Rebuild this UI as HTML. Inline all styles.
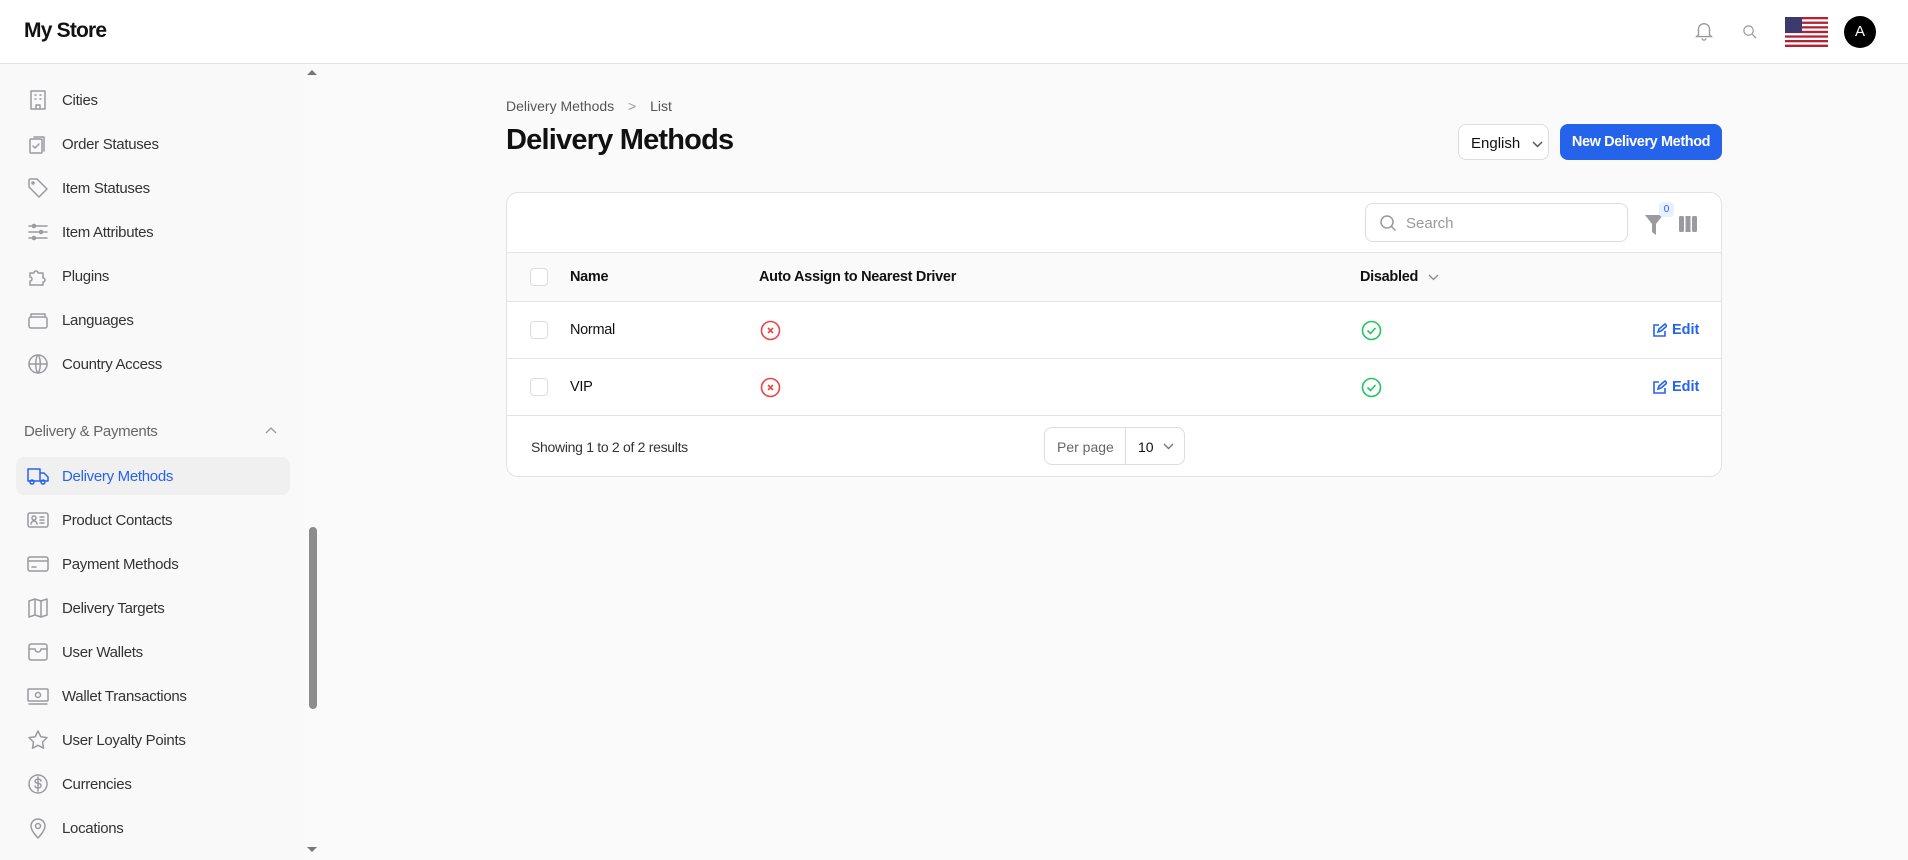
<!DOCTYPE html>
<html><head><meta charset="utf-8"><style>
*{box-sizing:border-box;margin:0;padding:0}
body{width:1908px;height:860px;overflow:hidden;background:#fafafa;font-family:"Liberation Sans",sans-serif;color:#111;position:relative}
.hdr{position:absolute;left:0;top:0;width:1908px;height:64px;background:#fff;border-bottom:1px solid #e5e5e5}
.logo{position:absolute;left:24px;top:19px;font-size:21px;font-weight:bold;letter-spacing:-0.8px}
.side{position:absolute;left:0;top:64px;width:305px;height:796px;background:#f9f9f9}
.track{position:absolute;left:305px;top:64px;width:15px;height:796px;background:#fafafa}
.thumb{position:absolute;left:309px;top:527px;width:8px;height:182px;border-radius:4px;background:#8c8c8c}
.it{position:absolute;left:24px;height:36px;width:264px;display:flex;align-items:center;font-size:15px;color:#333;letter-spacing:-0.3px}
.it svg{width:24px;height:24px;margin-right:12px;margin-left:2px;fill:none;stroke:#9a9aa0;stroke-width:1.5;stroke-linecap:round;stroke-linejoin:round}
.act{left:16px;padding-left:8px;background:#f0f0f1;border-radius:8px;color:#2563eb;width:274px;height:38px}
.act svg{stroke:#2563eb}
.grp{position:absolute;left:24px;top:359px;font-size:15px;color:#666;letter-spacing:-0.3px}
.bc{position:absolute;left:506px;top:98px;font-size:14px;color:#555}
h1{position:absolute;left:506px;top:124px;font-size:29px;font-weight:bold;letter-spacing:-0.8px}
.eng{position:absolute;left:1458px;top:124px;width:91px;height:36px;border:1px solid #ddd;border-radius:8px;background:#fff;font-size:15px;padding:10px 0 0 12px}
.nbtn{position:absolute;left:1560px;top:124px;width:162px;height:36px;background:#2563eb;border-radius:8px;color:#fff;font-weight:bold;font-size:14.5px;text-align:center;line-height:36px;letter-spacing:-0.4px}
.card{position:absolute;left:506px;top:192px;width:1216px;height:285px;background:#fff;border:1px solid #e3e3e3;border-radius:12px;overflow:hidden}
.srch{position:absolute;left:858px;top:10px;width:263px;height:39px;border:1px solid #ddd;border-radius:8px;font-size:15px;color:#999;padding:11px 0 0 40px}
.thead{position:absolute;left:0;top:59px;width:1216px;height:50px;background:#fafafa;border-top:1px solid #e5e5e5;border-bottom:1px solid #e5e5e5}
.row{position:absolute;left:0;width:1216px;height:57px;border-bottom:1px solid #e5e5e5}
.cb{position:absolute;left:23px;width:18px;height:18px;border:1px solid #ddd;border-radius:4px;background:#fff}
.t{position:absolute;font-size:14.5px;letter-spacing:-0.3px}
.b{font-weight:bold}
.edit{position:absolute;left:1146px;color:#2563eb;font-weight:bold;font-size:14.5px;display:flex;align-items:center;gap:5px}
.pp{position:absolute;left:537px;top:234px;width:141px;height:38px;border:1px solid #ddd;border-radius:8px;font-size:14px}
</style></head><body>
<div class="hdr"><div class="logo">My Store</div>
<svg style="position:absolute;left:1693px;top:19px" width="22" height="24" viewBox="0 0 24 24" fill="none" stroke="#999" stroke-width="1.5"><path d="M6 16V10a6 6 0 0112 0v6l2 2H4z M10 20a2 2 0 004 0"/></svg>
<svg style="position:absolute;left:1742px;top:24px" width="15" height="15" viewBox="0 0 16 16" fill="none" stroke="#999" stroke-width="1.3"><circle cx="7" cy="7" r="5"/><path d="M11 11l4 4"/></svg>
<svg style="position:absolute;left:1785px;top:17px" width="43" height="30" viewBox="0 0 43 30"><rect width="43" height="30" rx="4" fill="#fff"/><g fill="#b22234"><rect y="0" width="43" height="2.3"/><rect y="4.6" width="43" height="2.3"/><rect y="9.2" width="43" height="2.3"/><rect y="13.8" width="43" height="2.3"/><rect y="18.4" width="43" height="2.3"/><rect y="23" width="43" height="2.3"/><rect y="27.6" width="43" height="2.4"/></g><rect width="17" height="16" fill="#3c3b6e"/></svg>
<div style="position:absolute;left:1844px;top:16px;width:32px;height:32px;border-radius:50%;background:#000;color:#fff;font-size:15px;text-align:center;line-height:32px">A</div>
</div>
<div class="side">
<div class="it" style="top:18px"><svg viewBox="0 0 24 24"><rect x="5" y="3" width="14" height="18"/><path d="M9 7h1M14 7h1M9 11h1M14 11h1M10 21v-4h4v4"/></svg>Cities</div>
<div class="it" style="top:62px"><svg viewBox="0 0 24 24"><rect x="4" y="7" width="12" height="14" rx="1"/><path d="M8 5h10v14M7 14l2 2 4-4"/></svg>Order Statuses</div>
<div class="it" style="top:106px"><svg viewBox="0 0 24 24"><path d="M3 4v7l10 10 8-8L11 3H4z"/><circle cx="7" cy="7" r="1"/></svg>Item Statuses</div>
<div class="it" style="top:150px"><svg viewBox="0 0 24 24"><path d="M3 6h18M3 12h18M3 18h18"/><circle cx="8" cy="6" r="1.5"/><circle cx="15" cy="12" r="1.5"/><circle cx="8" cy="18" r="1.5"/></svg>Item Attributes</div>
<div class="it" style="top:194px"><svg viewBox="0 0 24 24"><path d="M4 9h4a2 2 0 114 0h5v5a2 2 0 110 4v3H4v-4a2 2 0 100-4z"/></svg>Plugins</div>
<div class="it" style="top:238px"><svg viewBox="0 0 24 24"><rect x="3" y="9" width="18" height="11" rx="2"/><path d="M5 9V6h14v3"/></svg>Languages</div>
<div class="it" style="top:282px"><svg viewBox="0 0 24 24"><circle cx="12" cy="12" r="9"/><path d="M3 12h18M12 3c3 3 3 15 0 18M12 3c-3 3-3 15 0 18"/></svg>Country Access</div>
<div class="grp">Delivery &amp; Payments</div>
<svg style="position:absolute;left:264px;top:362px" width="14" height="10" viewBox="0 0 14 10" fill="none" stroke="#999" stroke-width="1.3"><path d="M2 7l5-5 5 5"/></svg>
<div class="it act" style="top:393px"><svg viewBox="0 0 24 24"><path d="M2 5h12v12H2zM14 9h4l4 4v4h-8"/><circle cx="6" cy="18" r="2"/><circle cx="17" cy="18" r="2"/></svg>Delivery Methods</div>
<div class="it" style="top:438px"><svg viewBox="0 0 24 24"><rect x="2" y="5" width="20" height="14" rx="2"/><circle cx="8" cy="10" r="2"/><path d="M5 16a3 3 0 016 0M14 9h4M14 12h4M14 15h4"/></svg>Product Contacts</div>
<div class="it" style="top:482px"><svg viewBox="0 0 24 24"><rect x="2" y="5" width="20" height="14" rx="2"/><path d="M2 9h20M6 15h4"/></svg>Payment Methods</div>
<div class="it" style="top:526px"><svg viewBox="0 0 24 24"><path d="M3 5l6-2 6 2 6-2v16l-6 2-6-2-6 2zM9 3v16M15 5v16"/></svg>Delivery Targets</div>
<div class="it" style="top:570px"><svg viewBox="0 0 24 24"><rect x="3" y="4" width="18" height="16" rx="2"/><path d="M3 9h6a3 3 0 006 0h6"/></svg>User Wallets</div>
<div class="it" style="top:614px"><svg viewBox="0 0 24 24"><rect x="2" y="5" width="20" height="12" rx="1"/><circle cx="12" cy="11" r="2.5"/><path d="M3 20h18"/></svg>Wallet Transactions</div>
<div class="it" style="top:658px"><svg viewBox="0 0 24 24"><path d="M12 3l2.8 5.7 6.2.9-4.5 4.4 1 6.2L12 17.3 6.5 20.2l1-6.2L3 9.6l6.2-.9z"/></svg>User Loyalty Points</div>
<div class="it" style="top:702px"><svg viewBox="0 0 24 24"><circle cx="12" cy="12" r="9"/><path d="M15 9c0-1-1.3-2-3-2s-3 1-3 2.3 1.3 1.7 3 2 3 .8 3 2.2-1.300 2.5-3 2.5-3-1-3-2M12 5v14"/></svg>Currencies</div>
<div class="it" style="top:746px"><svg viewBox="0 0 24 24"><path d="M12 22s7-7 7-12a7 7 0 10-14 0c0 5 7 12 7 12z"/><circle cx="12" cy="10" r="2.5"/></svg>Locations</div>
</div>
<div class="track"></div>
<svg style="position:absolute;left:307px;top:69px" width="10" height="6"><path d="M0 6L5 1 10 6z" fill="#777"/></svg>
<svg style="position:absolute;left:307px;top:847px" width="10" height="6"><path d="M0 0L5 5 10 0z" fill="#777"/></svg>
<div class="thumb"></div>

<div class="bc">Delivery Methods <span style="margin:0 10px;color:#999">&gt;</span> List</div>
<h1>Delivery Methods</h1>
<div class="eng">English <svg style="margin-left:8px" width="11" height="8" viewBox="0 0 11 8" fill="none" stroke="#555" stroke-width="1.5"><path d="M1 2l4.5 4.5L10 2"/></svg></div>
<div class="nbtn">New Delivery Method</div>

<div class="card">
<div class="srch">Search<svg style="position:absolute;left:13px;top:10px" width="18" height="18" viewBox="0 0 18 18" fill="none" stroke="#999" stroke-width="1.5"><circle cx="8" cy="8" r="6"/><path d="M12.5 12.5l4 4"/></svg></div>
<svg style="position:absolute;left:1138px;top:22px" width="18" height="20" viewBox="0 0 18 20"><path d="M0 0h18L11 9v11l-4-3V9z" fill="#9a9aa0"/></svg>
<div style="position:absolute;left:1152px;top:9px;width:15px;height:15px;border-radius:4px;background:#e8efff;color:#2563eb;font-size:10px;text-align:center;line-height:15px">0</div>
<svg style="position:absolute;left:1172px;top:23px" width="18" height="16" viewBox="0 0 18 16"><rect x="0" y="0" width="5" height="16" rx="1.5" fill="#9a9aa0"/><rect x="6.5" y="0" width="5" height="16" fill="#9a9aa0"/><rect x="13" y="0" width="5" height="16" rx="1.5" fill="#9a9aa0"/></svg>
<div class="thead">
<div class="cb" style="top:15px"></div>
<div class="t b" style="left:63px;top:16px">Name</div>
<div class="t b" style="left:252px;top:16px">Auto Assign to Nearest Driver</div>
<div class="t b" style="left:853px;top:16px">Disabled <svg style="margin-left:6px" width="11" height="7" viewBox="0 0 11 7" fill="none" stroke="#888" stroke-width="1.3"><path d="M1 1l4.5 4.5L10 1"/></svg></div>
</div>
<div class="row" style="top:109px">
<div class="cb" style="top:19px"></div>
<div class="t" style="left:63px;top:20px">Normal</div>
<svg style="position:absolute;left:253px;top:18px" width="21" height="21" viewBox="0 0 21 21" fill="none" stroke="#ef4444" stroke-width="1.6"><circle cx="10.5" cy="10.5" r="9"/><path d="M8 8l5 5M13 8l-5 5"/></svg>
<svg style="position:absolute;left:854px;top:18px" width="21" height="21" viewBox="0 0 21 21" fill="none" stroke="#22c55e" stroke-width="1.6"><circle cx="10.5" cy="10.5" r="9"/><path d="M6.5 10.5l3 3 5-5.5"/></svg>
<div class="edit" style="top:20px"><svg width="14" height="14" viewBox="0 0 14 14" fill="none" stroke="#2563eb" stroke-width="1.6"><path d="M6 2H1v11h11V8M5 9l1-3 6-5 2 2-6 5z"/></svg>Edit</div>
</div>
<div class="row" style="top:166px">
<div class="cb" style="top:19px"></div>
<div class="t" style="left:63px;top:20px">VIP</div>
<svg style="position:absolute;left:253px;top:18px" width="21" height="21" viewBox="0 0 21 21" fill="none" stroke="#ef4444" stroke-width="1.6"><circle cx="10.5" cy="10.5" r="9"/><path d="M8 8l5 5M13 8l-5 5"/></svg>
<svg style="position:absolute;left:854px;top:18px" width="21" height="21" viewBox="0 0 21 21" fill="none" stroke="#22c55e" stroke-width="1.6"><circle cx="10.5" cy="10.5" r="9"/><path d="M6.5 10.5l3 3 5-5.5"/></svg>
<div class="edit" style="top:20px"><svg width="14" height="14" viewBox="0 0 14 14" fill="none" stroke="#2563eb" stroke-width="1.6"><path d="M6 2H1v11h11V8M5 9l1-3 6-5 2 2-6 5z"/></svg>Edit</div>
</div>
<div class="t" style="left:24px;top:246px;font-size:14px;color:#333">Showing 1 to 2 of 2 results</div>
<div class="pp"><span style="position:absolute;left:12px;top:11px;color:#666">Per page</span><div style="position:absolute;left:80px;top:0;width:1px;height:36px;background:#ddd"></div><span style="position:absolute;left:93px;top:11px">10</span><svg style="position:absolute;left:118px;top:15px" width="11" height="7" viewBox="0 0 11 7" fill="none" stroke="#777" stroke-width="1.4"><path d="M1 1l4.5 4.5L10 1"/></svg></div>
</div>
</body></html>
